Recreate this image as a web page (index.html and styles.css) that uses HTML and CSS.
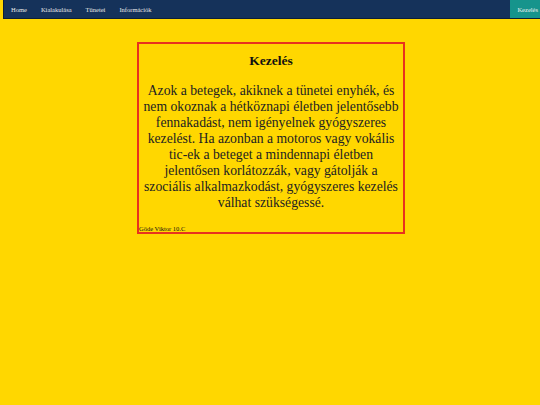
FILE: index.html
```html
<!DOCTYPE html>
<html lang="hu">
<head>
<meta charset="utf-8">
<title>Kezelés</title>
<link rel="stylesheet" href="styles.css">
</head>
<body>
<nav class="topnav">
  <a class="nav-link" href="#">Home</a>
  <a class="nav-link" href="#">Kialakulása</a>
  <a class="nav-link" href="#">Tünetei</a>
  <a class="nav-link" href="#">Információk</a>
  <a class="nav-link active" href="#">Kezelés</a>
</nav>
<main class="card">
  <h1 class="card-title">Kezelés</h1>
  <p class="card-text">Azok a betegek, akiknek a tünetei enyhék, és nem okoznak a hétköznapi életben jelentősebb fennakadást, nem igényelnek gyógyszeres kezelést. Ha azonban a motoros vagy vokális tic-ek a beteget a mindennapi életben jelentősen korlátozzák, vagy gátolják a szociális alkalmazkodást, gyógyszeres kezelés válhat szükségessé.</p>
  <footer class="card-footer">Göde Viktor 10.C</footer>
</main>
</body>
</html>
```
FILE: styles.css
```css
html {
  overflow-x: hidden;
}
html, body {
  margin: 0;
  background: #ffd700;
  font-family: "Liberation Serif", "Times New Roman", serif;
  color: #111;
}
body {
  padding: 0 0 0 2px;
}
.topnav {
  display: flex;
  width: calc(100% + 3px);
  height: 18px;
  margin-left: 1px;
  background: #15325a;
  border-left: 1px solid #0d1f38;
  border-bottom: 1px solid #0d1f38;
}
.nav-link {
  display: flex;
  align-items: center;
  padding: 0 7px;
  font-size: 6.5px;
  color: #e8e8e8;
  text-decoration: none;
}
.nav-link.active {
  margin-left: auto;
  background: #16948c;
  color: #f0f0f0;
}
.card {
  width: 264px;
  margin: 23px auto 0;
  border: 2px solid #e8321e;
  text-align: center;
}
.card-title {
  margin: 8px 0 0;
  font-size: 13.5px;
  line-height: 18px;
  font-weight: bold;
}
.card-text {
  margin: 13px 0 0;
  padding: 0 1.25px;
  font-size: 13.7px;
  line-height: 16px;
  color: #222;
}
.card-footer {
  margin-top: 14px;
  text-align: left;
  font-size: 6.5px;
  line-height: 7px;
}
```
